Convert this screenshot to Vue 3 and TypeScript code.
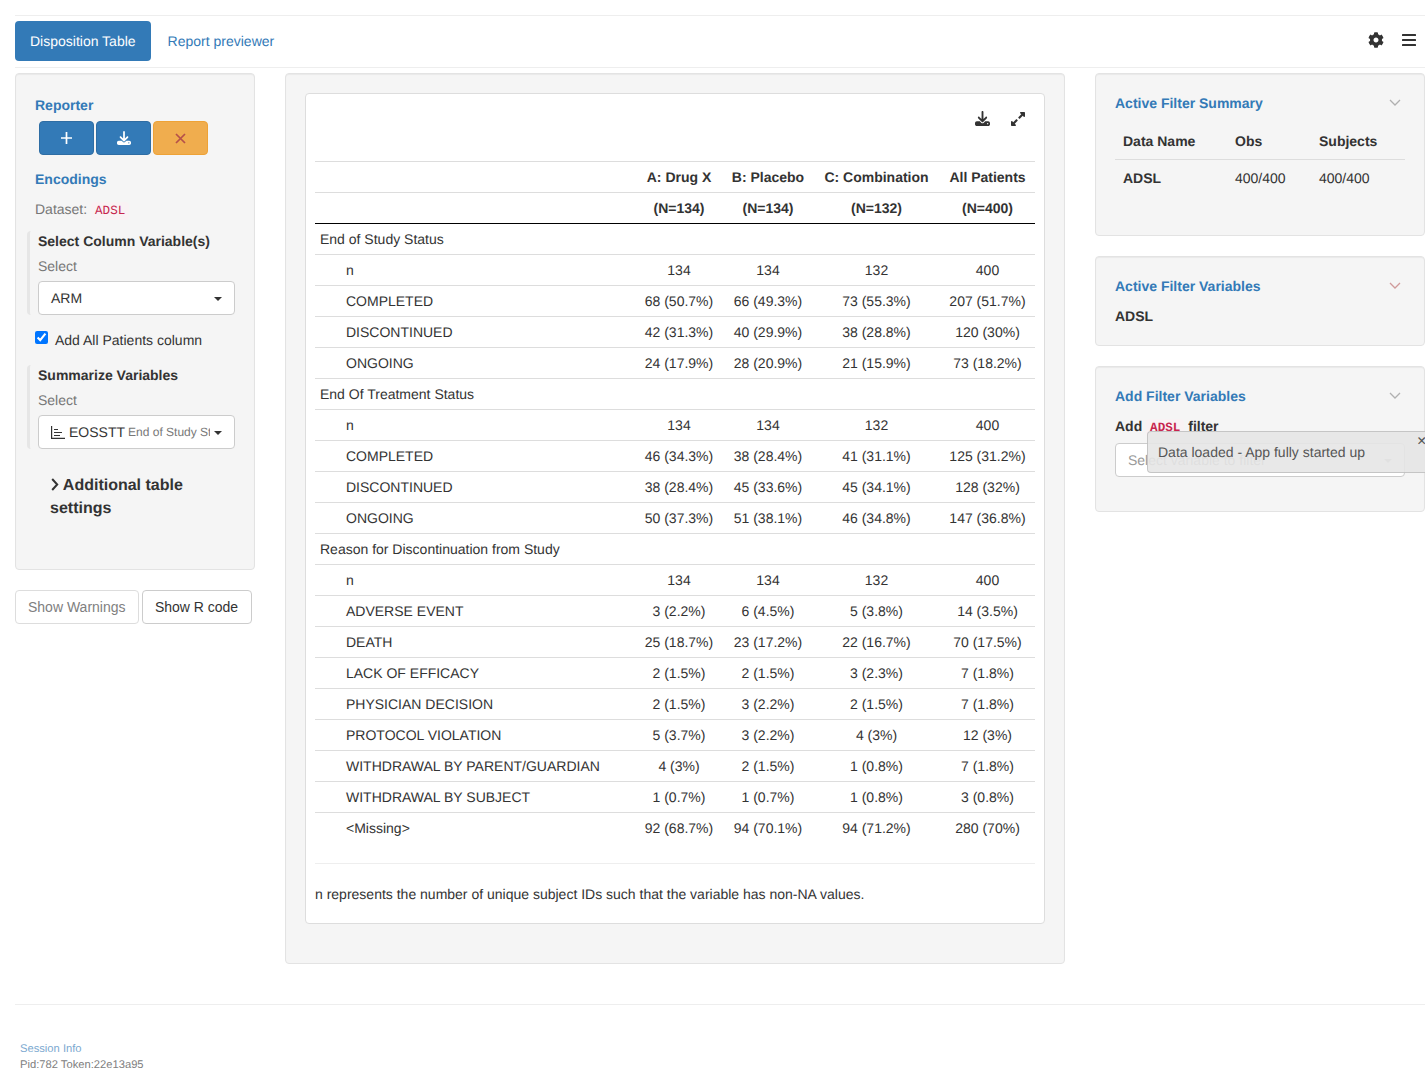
<script setup lang="ts">
interface Row {
  label: string
  values: string[]
  group?: boolean
}

const headers = ['A: Drug X', 'B: Placebo', 'C: Combination', 'All Patients']
const counts = ['(N=134)', '(N=134)', '(N=132)', '(N=400)']

const rows: Row[] = [
  { label: 'End of Study Status', values: ['', '', '', ''], group: true },
  { label: 'n', values: ['134', '134', '132', '400'] },
  { label: 'COMPLETED', values: ['68 (50.7%)', '66 (49.3%)', '73 (55.3%)', '207 (51.7%)'] },
  { label: 'DISCONTINUED', values: ['42 (31.3%)', '40 (29.9%)', '38 (28.8%)', '120 (30%)'] },
  { label: 'ONGOING', values: ['24 (17.9%)', '28 (20.9%)', '21 (15.9%)', '73 (18.2%)'] },
  { label: 'End Of Treatment Status', values: ['', '', '', ''], group: true },
  { label: 'n', values: ['134', '134', '132', '400'] },
  { label: 'COMPLETED', values: ['46 (34.3%)', '38 (28.4%)', '41 (31.1%)', '125 (31.2%)'] },
  { label: 'DISCONTINUED', values: ['38 (28.4%)', '45 (33.6%)', '45 (34.1%)', '128 (32%)'] },
  { label: 'ONGOING', values: ['50 (37.3%)', '51 (38.1%)', '46 (34.8%)', '147 (36.8%)'] },
  { label: 'Reason for Discontinuation from Study', values: ['', '', '', ''], group: true },
  { label: 'n', values: ['134', '134', '132', '400'] },
  { label: 'ADVERSE EVENT', values: ['3 (2.2%)', '6 (4.5%)', '5 (3.8%)', '14 (3.5%)'] },
  { label: 'DEATH', values: ['25 (18.7%)', '23 (17.2%)', '22 (16.7%)', '70 (17.5%)'] },
  { label: 'LACK OF EFFICACY', values: ['2 (1.5%)', '2 (1.5%)', '3 (2.3%)', '7 (1.8%)'] },
  { label: 'PHYSICIAN DECISION', values: ['2 (1.5%)', '3 (2.2%)', '2 (1.5%)', '7 (1.8%)'] },
  { label: 'PROTOCOL VIOLATION', values: ['5 (3.7%)', '3 (2.2%)', '4 (3%)', '12 (3%)'] },
  { label: 'WITHDRAWAL BY PARENT/GUARDIAN', values: ['4 (3%)', '2 (1.5%)', '1 (0.8%)', '7 (1.8%)'] },
  { label: 'WITHDRAWAL BY SUBJECT', values: ['1 (0.7%)', '1 (0.7%)', '1 (0.8%)', '3 (0.8%)'] },
  { label: '<Missing>', values: ['92 (68.7%)', '94 (70.1%)', '94 (71.2%)', '280 (70%)'] }
]

const colWidths = [320, 88, 90, 127, 95]
const downloadPath =
  'M288 32c0-17.7-14.3-32-32-32s-32 14.3-32 32V274.7l-73.4-73.4c-12.5-12.5-32.8-12.5-45.3 0s-12.5 32.8 0 45.3l128 128c12.5 12.5 32.8 12.5 45.3 0l128-128c12.5-12.5 12.5-32.8 0-45.3s-32.8-12.5-45.3 0L288 274.7V32zM64 352c-35.3 0-64 28.7-64 64v32c0 35.3 28.7 64 64 64H448c35.3 0 64-28.7 64-64V416c0-35.3-28.7-64-64-64H346.5l-45.3 45.3c-25 25-65.5 25-90.5 0L165.5 352H64zm368 56a24 24 0 1 1 0 48 24 24 0 1 1 0-48z'
</script>

<template>
  <div class="page">
    <div class="top-rule"></div>

    <nav class="nav">
      <a class="pill active">Disposition Table</a>
      <a class="pill">Report previewer</a>
      <div class="nav-icons">
        <svg class="gear" viewBox="0 0 512 512" fill="#333">
          <path d="M487.4 315.7l-42.6-24.6c4.3-23.2 4.3-47 0-70.2l42.6-24.6c4.9-2.8 7.1-8.6 5.5-14-11.1-35.6-30-67.8-54.7-94.6-3.8-4.1-10-5.1-14.8-2.3L380.8 110c-17.9-15.4-38.5-27.3-60.8-35.1V25.8c0-5.6-3.9-10.5-9.4-11.7-36.7-8.2-74.3-7.8-109.2 0-5.5 1.2-9.4 6.1-9.4 11.7V75c-22.2 7.9-42.8 19.8-60.8 35.1L88.7 85.5c-4.9-2.8-11-1.9-14.8 2.3-24.7 26.7-43.6 58.9-54.7 94.6-1.7 5.4.6 11.2 5.5 14L67.3 221c-4.3 23.2-4.3 47 0 70.2l-42.6 24.6c-4.9 2.8-7.1 8.6-5.5 14 11.1 35.6 30 67.8 54.7 94.6 3.8 4.1 10 5.1 14.8 2.3l42.6-24.6c17.9 15.4 38.5 27.3 60.8 35.1v49.2c0 5.6 3.9 10.5 9.4 11.7 36.7 8.2 74.3 7.8 109.2 0 5.5-1.2 9.4-6.1 9.4-11.7v-49.2c22.2-7.9 42.8-19.8 60.8-35.1l42.6 24.6c4.9 2.8 11 1.9 14.8-2.3 24.7-26.7 43.6-58.9 54.7-94.6 1.5-5.5-.7-11.3-5.6-14.1zM256 336c-44.1 0-80-35.9-80-80s35.9-80 80-80 80 35.9 80 80-35.9 80-80 80z" />
        </svg>
        <svg class="bars" viewBox="0 0 14 12" fill="#333">
          <rect x="0" y="0" width="14" height="2" rx="0.5" />
          <rect x="0" y="5" width="14" height="2" rx="0.5" />
          <rect x="0" y="10" width="14" height="2" rx="0.5" />
        </svg>
      </div>
    </nav>

    <div class="columns">
      <aside class="left">
        <div class="well">
          <div class="section-title reporter">Reporter</div>
          <div class="report-buttons">
            <button class="rbtn blue">
              <svg width="11" height="12" viewBox="0 0 11 12" stroke="#fff" stroke-width="1.7" fill="none">
                <path d="M5.5 0v12M0 6h11" />
              </svg>
            </button>
            <button class="rbtn blue">
              <svg width="14" height="14" viewBox="0 0 512 512" fill="#fff">
                <path :d="downloadPath" />
              </svg>
            </button>
            <button class="rbtn orange">
              <svg width="11" height="11" viewBox="0 0 11 11" stroke="#b5504a" stroke-width="1.7" fill="none">
                <path d="M1 1l9 9M10 1l-9 9" />
              </svg>
            </button>
          </div>

          <div class="section-title encodings">Encodings</div>
          <div class="dataset">Dataset: <code class="code">ADSL</code></div>

          <div class="block">
            <div class="block-title">Select Column Variable(s)</div>
            <div class="muted-label">Select</div>
            <div class="picker">
              <span>ARM</span>
              <i class="caret"></i>
            </div>
          </div>

          <label class="check-row">
            <input type="checkbox" checked />
            <span>Add All Patients column</span>
          </label>

          <div class="block second">
            <div class="block-title">Summarize Variables</div>
            <div class="muted-label">Select</div>
            <div class="picker">
              <svg class="chart" width="14" height="13" viewBox="0 0 14 13" fill="none" stroke="#333" stroke-width="1.2">
                <path d="M.6 0v12.4H14M3 3.5h4M3 6.5h8M3 9.5h6" />
              </svg>
              <span class="picker-name">EOSSTT</span>
              <span class="picker-sub">End of Study Status</span>
              <i class="caret"></i>
            </div>
          </div>

          <div class="more">
            <svg class="chevron-right" width="8" height="13" viewBox="0 0 8 13" fill="none" stroke="#333" stroke-width="2">
              <path d="M1.2 1l5 5.5-5 5.5" />
            </svg>
            Additional table settings
          </div>
        </div>

        <div class="action-row">
          <button class="btn disabled">Show Warnings</button>
          <button class="btn code-btn">Show R code</button>
        </div>
      </aside>

      <main class="well center">
        <div class="card">
          <div class="toolbar">
            <svg width="15" height="15" viewBox="0 0 512 512" fill="#333">
              <path :d="downloadPath" />
            </svg>
            <svg width="14" height="16" viewBox="0 0 448 512" fill="#333">
              <path d="M212.686 315.314L120 408l32.922 31.029c15.12 15.12 4.412 40.971-16.97 40.971h-112C10.697 480 0 469.255 0 456V344c0-21.382 25.803-32.09 40.922-16.971L72 360l92.686-92.686c6.248-6.248 16.379-6.248 22.627 0l25.373 25.373c6.249 6.248 6.249 16.378 0 22.627zm22.628-118.628L328 104l-32.922-31.029C279.958 57.851 290.666 32 312.048 32h112C437.303 32 448 42.745 448 56v112c0 21.382-25.803 32.09-40.922 16.971L376 152l-92.686 92.686c-6.248 6.248-16.379 6.248-22.627 0l-25.373-25.373c-6.249-6.248-6.249-16.378 0-22.627z" />
            </svg>
          </div>

          <table class="report">
            <colgroup>
              <col v-for="(w, i) in colWidths" :key="i" :width="w" />
            </colgroup>
            <thead>
              <tr>
                <th></th>
                <th v-for="h in headers" :key="h">{{ h }}</th>
              </tr>
              <tr>
                <th></th>
                <th v-for="(c, i) in counts" :key="i">{{ c }}</th>
              </tr>
            </thead>
            <tbody>
              <tr v-for="(row, i) in rows" :key="i">
                <td :class="row.group ? 'group-label' : 'row-label'">{{ row.label }}</td>
                <td v-for="(v, j) in row.values" :key="j">{{ v }}</td>
              </tr>
            </tbody>
          </table>

          <div class="table-note">n represents the number of unique subject IDs such that the variable has non-NA values.</div>
        </div>
      </main>

      <aside class="right">
        <section class="well side">
          <div class="side-head">
            <div class="section-title">Active Filter Summary</div>
            <svg class="chevron" width="12" height="7" viewBox="0 0 12 7" fill="none" stroke="#b0b0b0" stroke-width="1.3">
              <path d="M1 1l5 5 5-5" />
            </svg>
          </div>
          <div class="summary">
            <div class="summary-row head">
              <span>Data Name</span><span>Obs</span><span>Subjects</span>
            </div>
            <div class="summary-row">
              <span class="bold">ADSL</span><span>400/400</span><span>400/400</span>
            </div>
          </div>
        </section>

        <section class="well side">
          <div class="side-head">
            <div class="section-title">Active Filter Variables</div>
            <svg class="chevron" width="12" height="7" viewBox="0 0 12 7" fill="none" stroke="#d09a9a" stroke-width="1.3">
              <path d="M1 1l5 5 5-5" />
            </svg>
          </div>
          <div class="bold side-text">ADSL</div>
        </section>

        <section class="well side">
          <div class="side-head">
            <div class="section-title">Add Filter Variables</div>
            <svg class="chevron" width="12" height="7" viewBox="0 0 12 7" fill="none" stroke="#b0b0b0" stroke-width="1.3">
              <path d="M1 1l5 5 5-5" />
            </svg>
          </div>
          <div class="bold side-text">Add <code class="code">ADSL</code> filter</div>
          <div class="picker filter-picker">
            <span>Select variable to filter</span>
            <i class="caret light"></i>
          </div>
        </section>
      </aside>
    </div>

    <footer class="footer">
      <a class="session">Session Info</a>
      <div class="pid">Pid:782 Token:22e13a95</div>
    </footer>

    <div class="toast">
      Data loaded - App fully started up
      <span class="toast-close">×</span>
    </div>
  </div>
</template>

<style>
html,
body {
  margin: 0;
  background: #fff;
}
</style>

<style scoped>
* {
  box-sizing: border-box;
}

.page {
  position: relative;
  height: 1091px;
  overflow: hidden;
  padding: 15px 0 0 15px;
  font-family: "Liberation Sans", Arial, sans-serif;
  font-size: 14px;
  line-height: 20px;
  color: #333;
  text-rendering: geometricPrecision;
}

.top-rule {
  border-top: 1px solid #eee;
}

.nav {
  display: flex;
  align-items: center;
  gap: 2px;
  padding: 5px 0 6px;
  border-bottom: 1px solid #eee;
}

.pill {
  padding: 10px 15px;
  border-radius: 4px;
  color: #337ab7;
}

.pill.active {
  background: #337ab7;
  color: #fff;
}

.nav-icons {
  display: flex;
  align-items: center;
  gap: 18px;
  margin: 0 0 2px auto;
  padding-right: 9px;
}

.gear {
  width: 16px;
  height: 16px;
}

.bars {
  width: 14px;
  height: 12px;
}

.columns {
  display: grid;
  grid-template-columns: 240px 780px 330px;
  column-gap: 30px;
  align-items: start;
  margin-top: 5px;
}

.well {
  padding: 19px;
  background: #f5f5f5;
  border: 1px solid #e3e3e3;
  border-radius: 4px;
  box-shadow: inset 0 1px 1px rgba(0, 0, 0, 0.05);
}

.section-title {
  font-weight: 700;
  color: #337ab7;
}

.reporter {
  margin-top: 2px;
}

.report-buttons {
  display: flex;
  gap: 2px;
  margin: 6px 0 0 4px;
}

.rbtn {
  display: flex;
  align-items: center;
  justify-content: center;
  width: 55px;
  height: 34px;
  padding: 0;
  border-radius: 4px;
}

.rbtn.blue {
  background: #337ab7;
  border: 1px solid #2e6da4;
}

.rbtn.orange {
  background: #f0ad4e;
  border: 1px solid #eea236;
}

.encodings {
  margin-top: 14px;
}

.dataset {
  margin-top: 10px;
  color: #777;
}

.code {
  padding: 2px 4px;
  font-family: "Liberation Mono", monospace;
  font-size: 12.6px;
  line-height: 1;
  color: #c7254e;
  background: #f9f2f4;
  border-radius: 4px;
}

.block {
  margin: 12px 0 0 -8px;
  padding-left: 8px;
  border-left: 3px solid #e6e6e6;
  border-radius: 4px 0 0 4px;
}

.block.second {
  margin-top: 15px;
}

.block-title {
  font-weight: 700;
}

.muted-label {
  margin: 5px 0;
  color: #777;
}

.picker {
  position: relative;
  display: flex;
  align-items: center;
  height: 34px;
  padding: 0 12px;
  background: #fff;
  border: 1px solid #ccc;
  border-radius: 4px;
  white-space: nowrap;
  overflow: hidden;
}

.caret {
  position: absolute;
  top: 15px;
  right: 12px;
  border-top: 4px solid #333;
  border-left: 4px solid transparent;
  border-right: 4px solid transparent;
}

.caret.light {
  border-top-color: #bbb;
}

.chart {
  flex: none;
  margin-right: 4px;
}

.picker-name {
  flex: none;
  margin-right: 3px;
}

.picker-sub {
  width: 82px;
  overflow: hidden;
  font-size: 12px;
  color: #777;
}

.check-row {
  display: flex;
  align-items: center;
  gap: 7px;
  margin-top: 15px;
}

.check-row input {
  width: 13px;
  height: 13px;
  margin: 0 0 5px;
}

.more {
  margin: 25px 0 30px 15px;
  font-size: 16px;
  line-height: 23px;
  font-weight: 700;
}

.chevron-right {
  margin: 0 0 0 1px;
  vertical-align: -1px;
}

.action-row {
  display: flex;
  gap: 3px;
  margin-top: 20px;
}

.btn {
  height: 34px;
  padding: 6px 12px;
  font: inherit;
  color: #333;
  background: #fff;
  border: 1px solid #ccc;
  border-radius: 4px;
}

.btn.disabled {
  color: #808080;
  border-color: #ddd;
}

.code-btn {
  width: 110px;
  padding: 6px 0;
}

.center {
  padding-bottom: 39px;
}

.card {
  padding: 0 9px;
  background: #fff;
  border: 1px solid #ddd;
  border-radius: 4px;
}

.toolbar {
  display: flex;
  justify-content: flex-end;
  align-items: flex-start;
  gap: 21px;
  height: 67px;
  padding: 17px 10px 0 0;
}

.report {
  width: 720px;
  table-layout: fixed;
  border-collapse: separate;
  border-spacing: 0;
}

.report th,
.report td {
  height: 31px;
  padding: 5px 0;
  border-top: 1px solid #ddd;
  text-align: center;
  white-space: nowrap;
  font-weight: 400;
}

.report th {
  font-weight: 700;
}

.report tbody tr:first-child td {
  border-top-color: #000;
}

.report td.group-label {
  padding-left: 5px;
  text-align: left;
}

.report td.row-label {
  padding-left: 31px;
  text-align: left;
}

.table-note {
  margin-top: 20px;
  padding: 20px 0 19px;
  border-top: 1px solid #eee;
}

.side + .side {
  margin-top: 20px;
}

.side-head {
  display: flex;
  align-items: center;
  justify-content: space-between;
}

.chevron {
  margin: 0 4px 2px 0;
}

.summary {
  margin: 10px 0 20px;
}

.summary-row {
  display: grid;
  grid-template-columns: 112px 84px 94px;
  padding: 8px 0 8px 8px;
}

.summary-row.head {
  font-weight: 700;
  border-bottom: 1px solid #ddd;
}

.bold {
  font-weight: 700;
}

.side-text {
  margin-top: 10px;
}

.filter-picker {
  margin: 7px 0 15px;
  color: #999;
}

.footer {
  margin-top: 40px;
  padding: 36px 0 0 5px;
  border-top: 1px solid #eee;
  font-size: 11.2px;
  line-height: 16px;
}

.session {
  display: block;
  color: #337ab7;
  opacity: 0.65;
}

.pid {
  color: #808080;
}

.toast {
  position: absolute;
  top: 431px;
  left: 1147px;
  width: 300px;
  height: 42px;
  padding: 10px;
  color: #555;
  background: rgba(230, 230, 230, 0.9);
  border: 1px solid rgba(153, 153, 153, 0.45);
  border-radius: 4px;
}

.toast-close {
  position: absolute;
  top: 0;
  left: 269px;
  font-size: 16px;
  color: #555;
}
</style>
